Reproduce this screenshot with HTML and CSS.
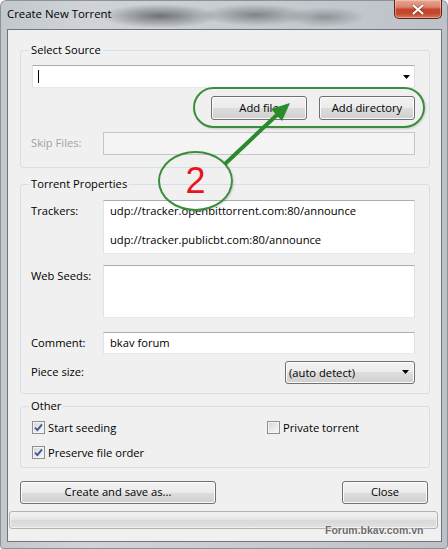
FILE: index.html
```html
<!DOCTYPE html>
<html>
<head>
<meta charset="utf-8">
<link rel="stylesheet" href="styles.css">
</head>
<body>
<div class="window">
  <div class="titlebar">
    <span class="title">Create New Torrent</span>
    <div class="close-btn">
      <svg width="14" height="11" viewBox="0 0 14 11"><path d="M2.5 1.5 L11.5 9.5 M11.5 1.5 L2.5 9.5" stroke="#5a1c10" stroke-width="3.4" stroke-linecap="round" opacity="0.5"/><path d="M2.5 1.5 L11.5 9.5 M11.5 1.5 L2.5 9.5" stroke="#ffffff" stroke-width="2.2" stroke-linecap="round"/></svg>
    </div>
  </div>
  <div class="client">
    <fieldset class="group g-source">
      <legend>Select Source</legend>
      <div class="combo-edit">
        <span class="caret"></span>
        <svg class="dd-arrow" width="7" height="4" viewBox="0 0 7 4"><path d="M0 0 H7 L3.5 4 Z" fill="#000"/></svg>
      </div>
      <div class="btn-row">
        <div class="btn btn-add">Add file</div>
        <div class="btn btn-add">Add directory</div>
      </div>
      <div class="field-row skip">
        <span class="lbl disabled">Skip Files:</span>
        <div class="textbox tb-disabled"></div>
      </div>
    </fieldset>

    <fieldset class="group g-props">
      <legend>Torrent Properties</legend>
      <div class="field-row top trackers">
        <span class="lbl">Trackers:</span>
        <div class="textbox tb-area tb-trackers">udp://tracker.openbittorrent.com:80/announce<br><br>udp://tracker.publicbt.com:80/announce</div>
      </div>
      <div class="field-row top seeds">
        <span class="lbl">Web Seeds:</span>
        <div class="textbox tb-area tb-seeds"></div>
      </div>
      <div class="field-row comment">
        <span class="lbl">Comment:</span>
        <div class="textbox tb-line">bkav forum</div>
      </div>
      <div class="field-row piece">
        <span class="lbl">Piece size:</span>
        <div class="combo-list">
          <span>(auto detect)</span>
          <svg width="7" height="4" viewBox="0 0 7 4"><path d="M0 0 H7 L3.5 4 Z" fill="#000"/></svg>
        </div>
      </div>
    </fieldset>

    <fieldset class="group g-other">
      <legend>Other</legend>
      <div class="checks">
        <label class="check"><span class="cb checked"><svg width="11" height="11" viewBox="0 0 11 11"><path d="M2 5.6 L4.4 8.2 L9 2.4" fill="none" stroke="#3e5a9e" stroke-width="1.9" stroke-linejoin="round"/></svg></span>Start seeding</label>
        <label class="check"><span class="cb"></span>Private torrent</label>
        <label class="check"><span class="cb checked"><svg width="11" height="11" viewBox="0 0 11 11"><path d="M2 5.6 L4.4 8.2 L9 2.4" fill="none" stroke="#3e5a9e" stroke-width="1.9" stroke-linejoin="round"/></svg></span>Preserve file order</label>
      </div>
    </fieldset>

    <div class="actions">
      <div class="btn btn-create">Create and save as...</div>
      <div class="btn btn-close">Close</div>
    </div>
    <div class="progress"></div>
  </div>

  <div class="annot-oval"></div>
  <div class="annot-circle">2</div>
  <svg class="annot-arrow" width="448" height="549" viewBox="0 0 448 549">
    <line x1="226" y1="163" x2="279" y2="113" stroke="#2b8a2b" stroke-width="4" stroke-linecap="round"/>
    <polygon points="290,103 271,109 282,121" fill="#2b8a2b"/>
  </svg>
  <div class="watermark">Forum.bkav.com.vn</div>
</div>
</body>
</html>
```

FILE: styles.css
```css
* { box-sizing: border-box; }

body {
  margin: 0;
  font-family: "Open Sans", "Noto Sans", sans-serif;
  font-size: 11.2px;
  color: #000;
  background: #fff;
}

.window {
  position: relative;
  width: 448px;
  height: 549px;
  display: flex;
  flex-direction: column;
  border-radius: 6px 6px 4px 4px;
  overflow: hidden;
  background:
    radial-gradient(ellipse 60px 12px at 160px 16px, rgba(70, 74, 80, 0.7), rgba(70, 74, 80, 0) 100%),
    radial-gradient(ellipse 55px 11px at 255px 15px, rgba(80, 84, 90, 0.6), rgba(80, 84, 90, 0) 100%),
    radial-gradient(ellipse 40px 10px at 325px 17px, rgba(90, 94, 100, 0.5), rgba(90, 94, 100, 0) 100%),
    linear-gradient(90deg, #c3c8cd 0%, #d0d4d8 20%, #c6cbd0 60%, #bcc2c8 100%);
  box-shadow: inset 0 0 0 1px #8c9298;
}

.titlebar {
  height: 29px;
  flex: none;
  display: flex;
  justify-content: space-between;
  align-items: flex-start;
  padding-left: 7px;
}

.title {
  line-height: 27px;
  font-size: 11.4px;
  color: #000;
}

.close-btn {
  width: 48px;
  height: 19px;
  margin-right: 6px;
  border: 1px solid #5c2417;
  border-top: none;
  border-radius: 0 0 5px 5px;
  background: linear-gradient(#e8a895 0%, #d9826b 40%, #c5452a 52%, #c3482d 75%, #d9775c 100%);
  box-shadow: inset 0 0 0 1px rgba(255, 220, 210, 0.45);
  display: flex;
  align-items: center;
  justify-content: center;
}

.client {
  flex: 1;
  margin: 0 6px 7px 7px;
  border: 1px solid #6f757b;
  background: #f0f0f0;
  padding: 0 11px 0 12px;
  display: flex;
  flex-direction: column;
}

.group {
  margin: 0;
  min-width: 0;
  border: 1px solid #d5dfe5;
  border-radius: 3px;
  padding: 0 14px 0 10px;
}

.group legend {
  padding: 0 2px 1px;
  margin-left: -2px;
  line-height: 15px;
}

.g-source { margin-top: 12px; padding-top: 7px; padding-bottom: 12px; }
.g-props { margin-top: 8px; padding-top: 8px; padding-bottom: 9px; }
.g-other { margin-top: 4px; padding-top: 5px; padding-bottom: 6px; }

.combo-edit {
  height: 23px;
  margin-left: 1px;
  background: #fff;
  border: 1px solid;
  border-color: #abadb3 #dbdfe6 #e3e9ef #e2e3ea;
  display: flex;
  align-items: center;
  justify-content: space-between;
  padding: 0 4px 0 5px;
}

.caret {
  width: 1px;
  height: 13px;
  background: #000;
}

.btn-row {
  display: flex;
  justify-content: flex-end;
  gap: 12px;
  margin-top: 8px;
}

.btn {
  height: 24px;
  border: 1px solid #707070;
  border-radius: 3px;
  background: linear-gradient(#f2f2f2 0%, #ebebeb 50%, #dddddd 50%, #cfcfcf 100%);
  box-shadow: inset 0 0 0 1px #fbfbfb;
  display: flex;
  align-items: center;
  justify-content: center;
  padding-bottom: 2px;
  color: #000;
}

.btn-add { width: 96px; }

.field-row {
  display: grid;
  grid-template-columns: 72px 1fr;
  align-items: center;
}

.field-row.top { align-items: start; }
.field-row.top .lbl { padding-top: 3px; line-height: 16px; }

.lbl { line-height: 16px; padding-bottom: 1px; }
.lbl.disabled { color: #a3a3a3; }

.skip { margin-top: 12px; }

.textbox {
  background: #fff;
  border: 1px solid;
  border-color: #abadb3 #dbdfe6 #e3e9ef #e2e3ea;
}

.tb-disabled {
  height: 23px;
  background: #f4f4f4;
  border-color: #c6c6c6;
}

.tb-area {
  padding: 3px 6px 0 6px;
  line-height: 14.5px;
}

.tb-trackers { height: 54px; }
.seeds { margin-top: 11px; }
.tb-seeds { height: 53px; }

.comment { margin-top: 14px; }
.tb-line {
  height: 22px;
  padding: 0 6px;
  line-height: 19px;
}

.piece { margin-top: 7px; }
.combo-list {
  justify-self: end;
  width: 130px;
  height: 23px;
  border: 1px solid #707070;
  border-radius: 3px;
  background: linear-gradient(#f2f2f2 0%, #ebebeb 50%, #dddddd 50%, #cfcfcf 100%);
  box-shadow: inset 0 0 0 1px #fbfbfb;
  display: flex;
  align-items: center;
  justify-content: space-between;
  padding: 0 5px 1px 3px;
}

.checks {
  display: grid;
  grid-template-columns: 235px auto;
  row-gap: 8px;
}

.check {
  display: flex;
  align-items: center;
  gap: 2px;
  height: 17px;
  margin-left: 1px;
}

.cb {
  width: 13px;
  height: 13px;
  flex: none;
  border: 1px solid #8e8f8f;
  background: linear-gradient(135deg, #d4d4d4 0%, #ececec 60%, #f8f8f8 100%);
  box-shadow: inset 0 0 0 1px #f4f4f4;
  display: flex;
  align-items: center;
  justify-content: center;
  margin-right: 1px;
}

.actions {
  display: flex;
  justify-content: space-between;
  margin-top: 13px;
  padding-right: 2px;
}

.actions .btn { height: 23px; }
.btn-create { width: 196px; }
.btn-close { width: 86px; }

.progress {
  height: 18px;
  margin: 7px -8px 0 -11px;
  border: 1px solid #b2b2b2;
  border-radius: 3px;
  background: linear-gradient(#f4f4f4 0%, #e6e6e6 45%, #d8d8d8 55%, #e2e2e2 100%);
  box-shadow: inset 0 0 0 1px #f0f0f0;
}

.annot-oval {
  position: absolute;
  left: 193px;
  top: 87px;
  width: 232px;
  height: 41px;
  border: 2px solid #3a8d3a;
  border-radius: 21px;
  box-shadow: 1px 1px 2px rgba(0, 0, 0, 0.15);
}

.annot-circle {
  position: absolute;
  left: 158px;
  top: 151px;
  width: 75px;
  height: 60px;
  border: 2px solid #3a8d3a;
  border-radius: 50%;
  display: flex;
  align-items: center;
  justify-content: center;
  font-family: "Liberation Sans", Arial, sans-serif;
  font-size: 36px;
  color: #e8141b;
  line-height: 1;
  box-shadow: 1px 1px 2px rgba(0, 0, 0, 0.15);
}

.annot-arrow {
  position: absolute;
  left: 0;
  top: 0;
  pointer-events: none;
}

.watermark {
  position: absolute;
  left: 325px;
  top: 524px;
  font-family: "Liberation Sans", Arial, sans-serif;
  font-weight: bold;
  font-size: 10.5px;
  color: #6c6c6c;
  text-shadow: 0 0 2px #fff, 0 0 1px #fff;
}
```
